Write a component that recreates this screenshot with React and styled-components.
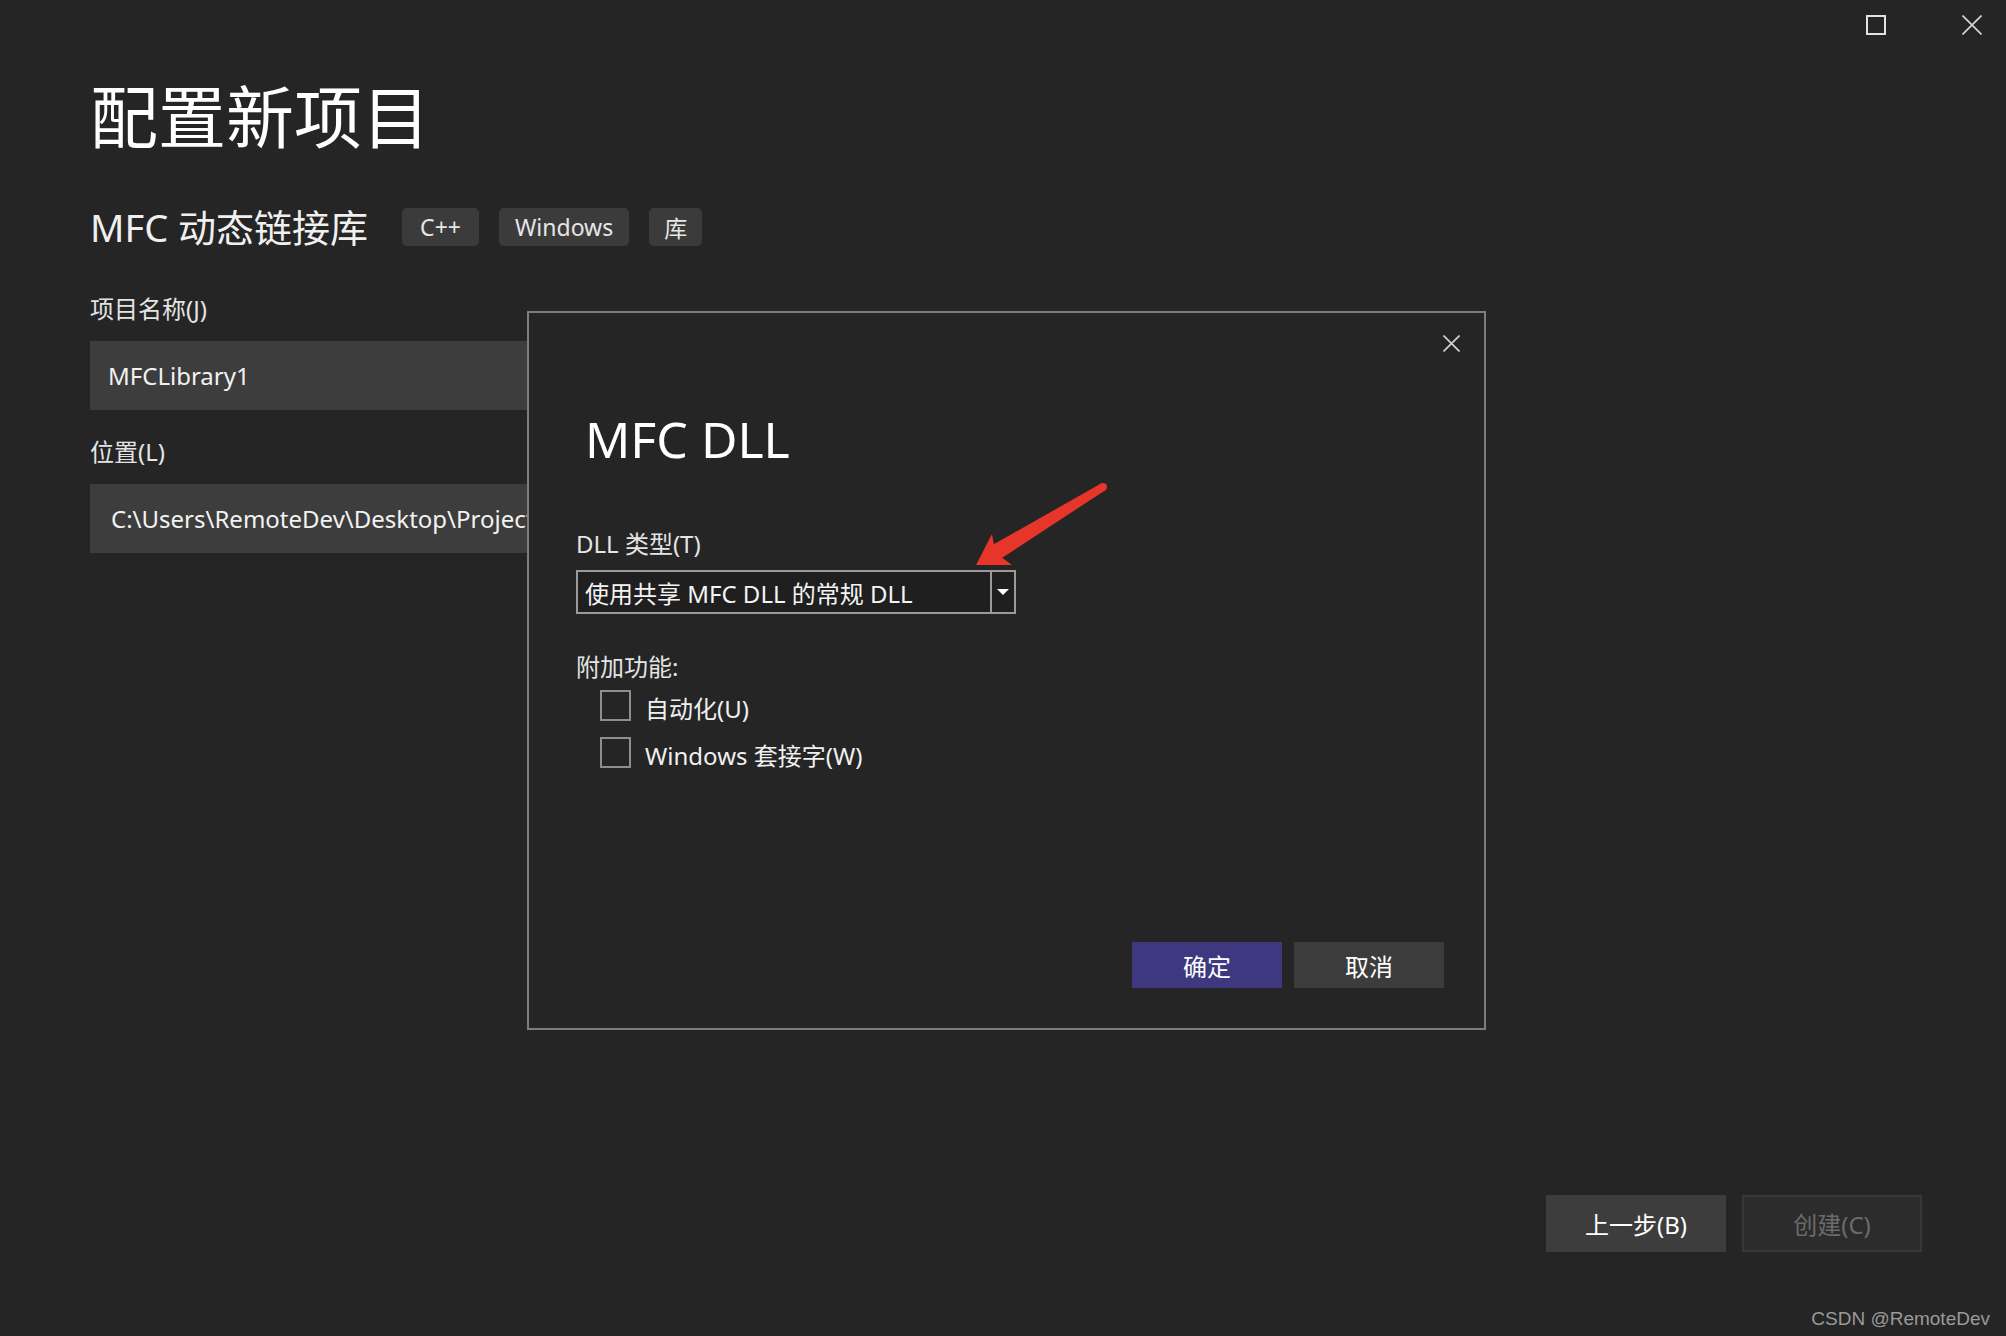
import React from "react";
import styled, { createGlobalStyle } from "styled-components";

const Global = createGlobalStyle`
  html, body { margin: 0; padding: 0; background: #252525; }
  body { font-family: "Noto Sans", "Noto Sans CJK SC", sans-serif; }
  * { box-sizing: border-box; }
`;

const Page = styled.div`
  position: relative;
  width: 2006px;
  height: 1336px;
  background: #252525;
  color: #e8e8e8;
  display: flex;
  flex-direction: column;
  overflow: hidden;
`;

const TitleBar = styled.div`
  height: 50px;
  display: flex;
  justify-content: flex-end;
  align-items: flex-start;
  padding: 15px 24px 0 0;
  gap: 76px;
`;

const WinButton = styled.div`
  width: 20px;
  height: 20px;
  display: flex;
  align-items: center;
  justify-content: center;
`;

const Main = styled.div`
  display: flex;
  flex-direction: column;
  align-items: flex-start;
  padding-left: 90px;
`;

const Heading = styled.h1`
  margin: 30px 0 0;
  font-size: 68px;
  line-height: 68px;
  font-weight: 400;
  color: #ffffff;
  font-family: "Noto Sans CJK SC", sans-serif;
`;

const SubRow = styled.div`
  margin-top: 60px;
  height: 38px;
  display: flex;
  align-items: center;
`;

const SubTitle = styled.div`
  font-size: 38px;
  line-height: 38px;
  color: #f0f0f0;
  margin-right: 34px;
`;

const Tag = styled.span`
  height: 38px;
  padding: 0 ${(p) => p.$pad || 16}px;
  margin-right: 20px;
  border-radius: 5px;
  background: #3b3b3b;
  color: #e6e6e6;
  font-size: 23px;
  display: flex;
  align-items: center;
`;

const FieldLabel = styled.div`
  margin-top: ${(p) => p.$top}px;
  margin-bottom: 16px;
  font-size: 24px;
  line-height: 32px;
  color: #e4e4e4;
`;

const TextBox = styled.div`
  width: 880px;
  height: 69px;
  background: #3d3d3d;
  color: #f2f2f2;
  font-size: 24px;
  display: flex;
  align-items: center;
  padding-left: ${(p) => p.$pad || 18}px;
  white-space: nowrap;
  overflow: hidden;
`;

const Footer = styled.div`
  margin-top: auto;
  display: flex;
  justify-content: flex-end;
  gap: 16px;
  padding: 0 84px 84px 0;
`;

const WizardButton = styled.div`
  width: 180px;
  height: 57px;
  display: flex;
  align-items: center;
  justify-content: center;
  font-size: 24px;
  background: ${(p) => (p.$disabled ? "#2c2c2c" : "#3d3d3d")};
  border: 2px solid ${(p) => (p.$disabled ? "#383838" : "#3d3d3d")};
  color: ${(p) => (p.$disabled ? "#6b6b6b" : "#ffffff")};
`;

const Watermark = styled.div`
  position: absolute;
  right: 16px;
  bottom: 6px;
  font-family: "Liberation Sans", Arial, sans-serif;
  font-size: 19px;
  color: #9a9a9a;
`;

/* Dialog */
const Dialog = styled.div`
  position: absolute;
  left: 527px;
  top: 311px;
  width: 959px;
  height: 719px;
  background: #252525;
  border: 2px solid #7d7d7d;
  display: flex;
  flex-direction: column;
`;

const DialogTop = styled.div`
  display: flex;
  justify-content: flex-end;
  padding: 22px 24px 0 0;
`;

const CloseX = styled.div`
  width: 17px;
  height: 17px;
  display: flex;
`;

const DialogBody = styled.div`
  display: flex;
  flex-direction: column;
  align-items: flex-start;
  padding-left: 47px;
`;

const DialogTitle = styled.div`
  margin-top: 62px;
  margin-left: 9px;
  font-size: 50px;
  line-height: 50px;
  color: #ffffff;
`;

const DialogLabel = styled.div`
  margin-top: ${(p) => p.$top}px;
  font-size: 24px;
  line-height: 32px;
  color: #e4e4e4;
`;

const Select = styled.div`
  margin-top: 10px;
  width: 440px;
  height: 44px;
  border: 2px solid #9b9b9b;
  background: #1f1f1f;
  display: flex;
  align-items: stretch;
`;

const SelectValue = styled.div`
  flex: 1;
  display: flex;
  align-items: center;
  padding-left: 7px;
  font-size: 24px;
  color: #f4f4f4;
  white-space: nowrap;
`;

const SelectArrow = styled.div`
  width: 24px;
  border-left: 2px solid #9b9b9b;
  display: flex;
  align-items: center;
  justify-content: center;
`;

const CheckList = styled.div`
  margin-top: 7px;
  margin-left: 24px;
  display: flex;
  flex-direction: column;
  gap: 16px;
`;

const CheckRow = styled.div`
  display: flex;
  align-items: center;
  height: 31px;
`;

const CheckBox = styled.span`
  width: 31px;
  height: 31px;
  border: 2px solid #8e8e8e;
  margin-right: 14px;
`;

const CheckLabel = styled.span`
  font-size: 24px;
  line-height: 32px;
  padding-top: 6px;
  color: #f0f0f0;
`;

const DialogFooter = styled.div`
  margin-top: auto;
  display: flex;
  justify-content: flex-end;
  gap: 12px;
  padding: 0 40px 40px 0;
`;

const DialogButton = styled.div`
  width: 150px;
  height: 46px;
  display: flex;
  align-items: center;
  justify-content: center;
  font-size: 24px;
  color: #ffffff;
  background: ${(p) => (p.$primary ? "#3e3880" : "#3c3c3c")};
`;

const Arrow = styled.svg`
  position: absolute;
  left: 960px;
  top: 470px;
  width: 160px;
  height: 110px;
`;

export default function App() {
  return (
    <>
      <Global />
      <Page>
        <TitleBar>
          <WinButton>
            <svg width="20" height="20" viewBox="0 0 20 20">
              <rect x="1" y="1" width="18" height="18" fill="none" stroke="#e2e2e2" strokeWidth="2" />
            </svg>
          </WinButton>
          <WinButton>
            <svg width="20" height="20" viewBox="0 0 20 20">
              <path d="M0.5 0.5 L19.5 19.5 M19.5 0.5 L0.5 19.5" stroke="#d8d8d8" strokeWidth="1.6" />
            </svg>
          </WinButton>
        </TitleBar>

        <Main>
          <Heading>配置新项目</Heading>
          <SubRow>
            <SubTitle>MFC 动态链接库</SubTitle>
            <Tag $pad={18}>C++</Tag>
            <Tag>Windows</Tag>
            <Tag $pad={15}>库</Tag>
          </SubRow>

          <FieldLabel $top={47}>项目名称(J)</FieldLabel>
          <TextBox>MFCLibrary1</TextBox>

          <FieldLabel $top={26}>位置(L)</FieldLabel>
          <TextBox $pad={21}>C:\Users\RemoteDev\Desktop\Projects</TextBox>
        </Main>

        <Footer>
          <WizardButton>上一步(B)</WizardButton>
          <WizardButton $disabled>创建(C)</WizardButton>
        </Footer>

        <Dialog>
          <DialogTop>
            <CloseX>
              <svg width="17" height="17" viewBox="0 0 17 17">
                <path d="M0.5 0.5 L16.5 16.5 M16.5 0.5 L0.5 16.5" stroke="#d4d4d4" strokeWidth="1.6" />
              </svg>
            </CloseX>
          </DialogTop>
          <DialogBody>
            <DialogTitle>MFC DLL</DialogTitle>
            <DialogLabel $top={64}>DLL 类型(T)</DialogLabel>
            <Select>
              <SelectValue>使用共享 MFC DLL 的常规 DLL</SelectValue>
              <SelectArrow>
                <svg width="12" height="6" viewBox="0 0 12 6">
                  <path d="M0 0 H12 L6 6 Z" fill="#ffffff" />
                </svg>
              </SelectArrow>
            </Select>
            <DialogLabel $top={37}>附加功能:</DialogLabel>
            <CheckList>
              <CheckRow>
                <CheckBox />
                <CheckLabel>自动化(U)</CheckLabel>
              </CheckRow>
              <CheckRow>
                <CheckBox />
                <CheckLabel>Windows 套接字(W)</CheckLabel>
              </CheckRow>
            </CheckList>
          </DialogBody>
          <DialogFooter>
            <DialogButton $primary>确定</DialogButton>
            <DialogButton>取消</DialogButton>
          </DialogFooter>
        </Dialog>

        <Arrow viewBox="0 0 160 110">
          <path
            d="M141 13.6 L33.8 74.2 L32 64 L16 95 L52 95 L42.2 87.8 L145 20.4 Z"
            fill="#e8352a"
          />
          <circle cx="143" cy="17" r="4" fill="#e8352a" />
        </Arrow>

        <Watermark>CSDN @RemoteDev</Watermark>
      </Page>
    </>
  );
}
